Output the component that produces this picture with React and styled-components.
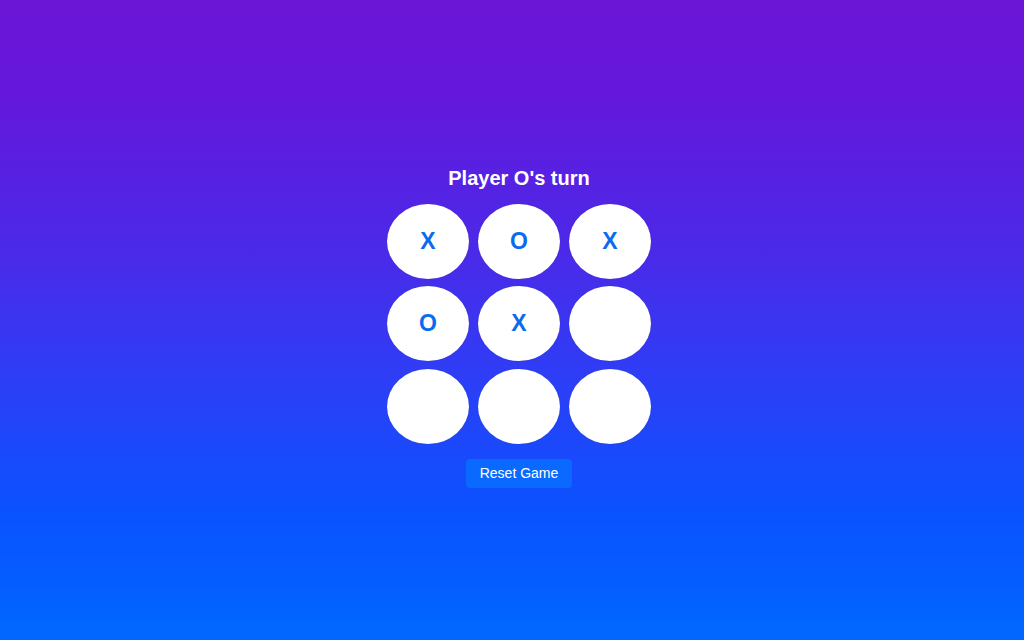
import React, { useState } from "react";
import styled, { createGlobalStyle } from "styled-components";

const GlobalStyle = createGlobalStyle`
  * {
    box-sizing: border-box;
  }
  body {
    margin: 0;
    font-family: "Liberation Sans", Arial, sans-serif;
  }
`;

const initialBoard = ["X", "O", "X", "O", "X", null, null, null, null];

const App = () => {
  const [board, setBoard] = useState(initialBoard);
  const [turn, setTurn] = useState("O");

  const play = (i) => {
    if (board[i]) return;
    const next = [...board];
    next[i] = turn;
    setBoard(next);
    setTurn(turn === "X" ? "O" : "X");
  };

  const reset = () => {
    setBoard(Array(9).fill(null));
    setTurn("X");
  };

  return (
    <>
      <GlobalStyle />
      <Page>
        <Title>Player {turn}'s turn</Title>
        <Board>
          {board.map((value, i) => (
            <Cell key={i} onClick={() => play(i)}>
              {value}
            </Cell>
          ))}
        </Board>
        <ResetButton onClick={reset}>Reset Game</ResetButton>
      </Page>
    </>
  );
};

export default App;

const Page = styled.main`
  min-height: 100vh;
  padding: 14px 0 0 14px;
  display: flex;
  flex-direction: column;
  align-items: center;
  justify-content: center;
  background: linear-gradient(
    to bottom,
    #6b14d6 0%,
    #6418dc 15%,
    #4a2ae9 40%,
    #2c3ff7 60%,
    #0a52ff 80%,
    #0068ff 100%
  );
`;

const Title = styled.h2`
  margin: 0 0 14px;
  font-size: 20px;
  line-height: 23px;
  font-weight: 700;
  color: #ffffff;
`;

const Board = styled.div`
  display: grid;
  grid-template-columns: repeat(3, 82px);
  grid-auto-rows: 75px;
  column-gap: 9px;
  row-gap: 7.5px;
`;

const Cell = styled.button`
  display: flex;
  align-items: center;
  justify-content: center;
  border: none;
  border-radius: 50%;
  background: #ffffff;
  box-shadow: 0 0 1px rgba(0, 0, 0, 0.25);
  font-family: "Liberation Sans", Arial, sans-serif;
  font-size: 23px;
  font-weight: 700;
  color: #0b6bf0;
  cursor: pointer;
  padding: 0;
`;

const ResetButton = styled.button`
  margin-top: 15px;
  width: 106px;
  height: 29px;
  border: none;
  border-radius: 4px;
  background: #0a69ff;
  color: #ffffff;
  font-family: "Liberation Sans", Arial, sans-serif;
  font-size: 14px;
  cursor: pointer;
`;
